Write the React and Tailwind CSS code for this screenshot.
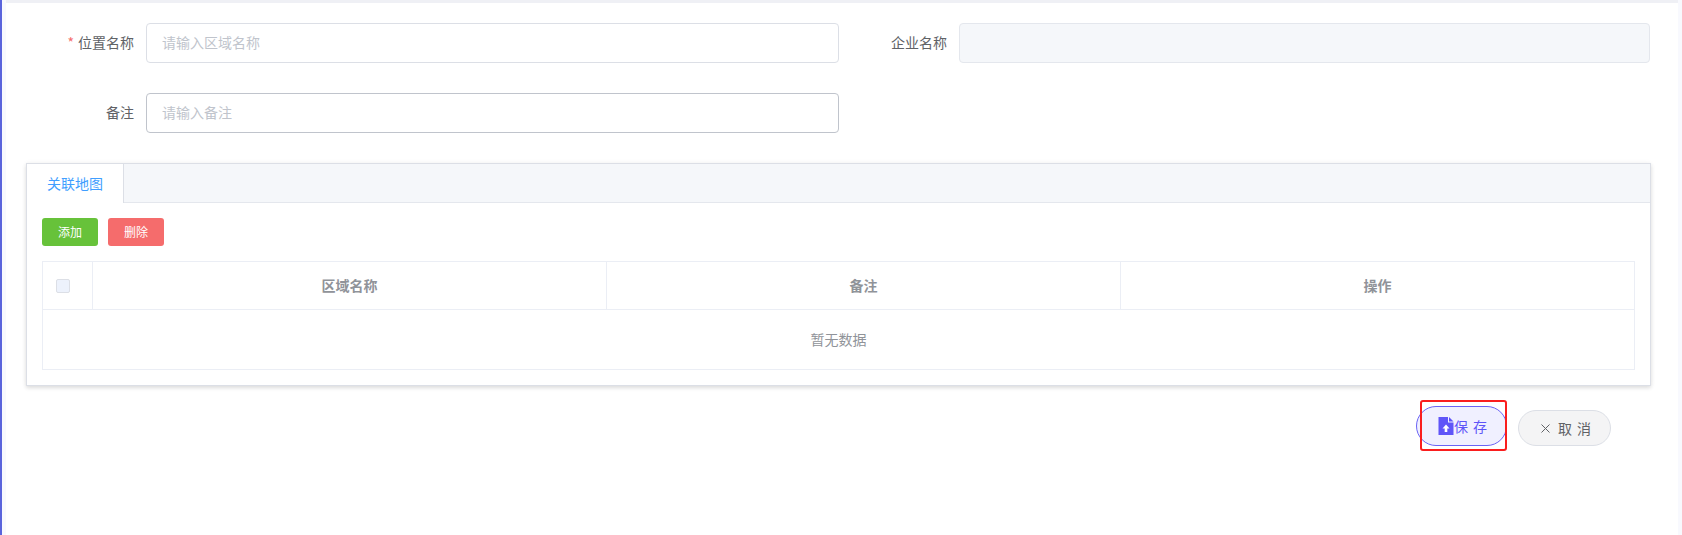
import React from 'react'

const FONT = "font-['Microsoft_YaHei','Noto_Sans_CJK_SC',sans-serif]"

function FormItem({ label, required, placeholder, disabled, hover, width }) {
  return (
    <div className={`flex items-center ${width}`}>
      <label className="w-[108px] pb-0.5 text-right text-sm text-[#606266]">
        {required && <span className="mr-1 text-[#f56c6c]">*</span>}
        {label}
      </label>
      <input
        disabled={disabled}
        placeholder={placeholder}
        className={`ml-3 h-10 flex-1 rounded border px-[15px] pb-0.5 text-sm outline-none placeholder:text-[#c0c4cc] ${
          disabled ? 'border-[#e4e7ed] bg-[#f5f7fa]' : hover ? 'border-[#c0c4cc] bg-white' : 'border-[#dcdfe6] bg-white'
        }`}
      />
    </div>
  )
}

export default function App() {
  return (
    <div className={`flex h-[535px] w-full overflow-hidden bg-white ${FONT}`}>
      {/* left edge of the page */}
      <div className="w-0.5 shrink-0 bg-[#5a64dc]" />
      <div className="w-1 shrink-0 bg-[#f8f9fe]" />

      <div className="flex min-w-0 flex-1 flex-col">
        <div className="h-[3px] shrink-0 bg-[#eff0f5]" />

        <div className="pl-5 pr-[27px] pt-5">
          <div className="flex">
            <FormItem width="w-[813px]" label="位置名称" required placeholder="请输入区域名称" />
            <FormItem width="w-[811px]" label="企业名称" disabled />
          </div>
          <div className="mt-[30px] flex">
            <FormItem width="w-[813px]" label="备注" hover placeholder="请输入备注" />
          </div>

          {/* tabs card */}
          <div className="mt-[30px] h-[223px] border border-[#dcdfe6] bg-white shadow-[0_2px_4px_0_rgba(0,0,0,0.12),0_0_6px_0_rgba(0,0,0,0.04)]">
            <div className="flex h-[39px] border-b border-[#e4e7ed] bg-[#f5f7fa]">
              <div className="-mb-px flex h-[39px] w-[97px] items-center justify-center border-r border-[#dcdfe6] bg-white pb-0.5 text-sm text-[#409eff]">
                关联地图
              </div>
            </div>

            <div className="px-[15px] pt-[15px]">
              <div className="flex gap-2.5">
                <button className="h-7 w-14 rounded-[3px] bg-[#67c23a] text-xs text-white">添加</button>
                <button className="h-7 w-14 rounded-[3px] bg-[#f56c6c] text-xs text-white">删除</button>
              </div>

              <div className="mt-[15px] border border-[#ebeef5] text-sm text-[#909399]">
                <div className="grid h-12 grid-cols-[49px_1fr_1fr_1fr] border-b border-[#ebeef5] font-bold">
                  <div className="flex items-center pl-[13px]">
                    <span className="h-3.5 w-3.5 rounded-[2px] border border-[#dcdfe6] bg-[#edf2fc]" />
                  </div>
                  <div className="flex items-center justify-center border-l border-[#ebeef5] pb-0.5">区域名称</div>
                  <div className="flex items-center justify-center border-l border-[#ebeef5] pb-0.5">备注</div>
                  <div className="flex items-center justify-center border-l border-[#ebeef5] pb-0.5">操作</div>
                </div>
                <div className="flex h-[59px] items-center justify-center pb-0.5">暂无数据</div>
              </div>
            </div>
          </div>

          {/* footer buttons */}
          <div className="mt-5 flex items-end justify-end gap-[11px] pr-10">
            <div className="relative">
              <button className="flex h-10 w-[91px] items-center justify-center rounded-full border border-[#6a63f5] bg-[#f0f0ff] pl-[3px] text-sm tracking-[1px] text-[#5f55f8]">
                <svg viewBox="0 0 15 18" className="h-[18px] w-[16px] shrink-0">
                  <path fill="#5f55f8" d="M0 0h9.5v5.5H15V18H0z" />
                  <path fill="#5f55f8" d="M10.5 0 15 4.5h-4.5z" />
                  <path fill="#fff" d="M7.5 7.5 11 11.5H8.8V15H6.2v-3.5H4z" />
                </svg>
                保 存
              </button>
              {/* red highlight drawn over the button */}
              <div className="pointer-events-none absolute -bottom-[5px] -top-[6px] left-1 right-0 rounded-[3px] border-2 border-[#fa1e1e]" />
            </div>
            <button className="flex h-9 w-[93px] items-center justify-center gap-2 rounded-full border border-[#dcdfe6] bg-[#f4f4f5] pl-1 text-sm tracking-[1px] text-[#606266]">
              <svg viewBox="0 0 9 9" className="h-[9px] w-[9px] shrink-0" fill="none" stroke="#606266" strokeWidth="1">
                <path d="M0.5 0.5l8 8M8.5 0.5l-8 8" />
              </svg>
              取 消
            </button>
          </div>
        </div>
      </div>

      <div className="w-1 shrink-0 bg-[#f8f9fe]" />
    </div>
  )
}
